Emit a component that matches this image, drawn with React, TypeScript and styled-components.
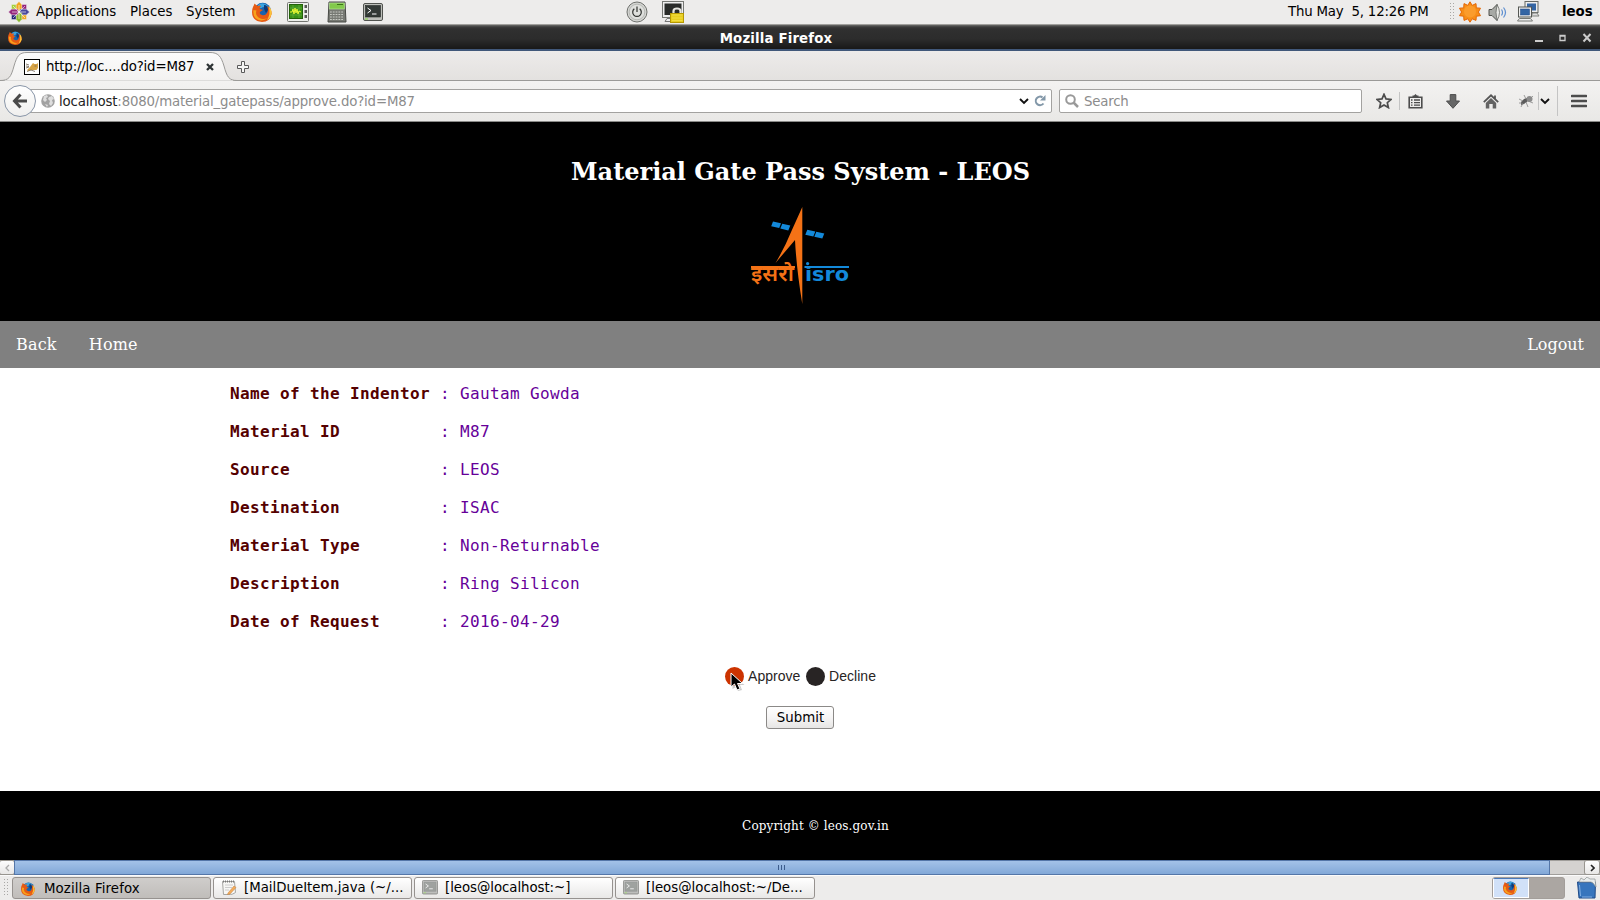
import React from "react";
import styled, { createGlobalStyle } from "styled-components";

const Global = createGlobalStyle`
  * { box-sizing: border-box; }
  html, body { margin: 0; padding: 0; overflow: hidden; background: #fff; }
  svg { display: block; flex: none; }
`;

const Desktop = styled.div`
  width: 1600px;
  height: 900px;
  display: flex;
  flex-direction: column;
  overflow: hidden;
  font-family: "DejaVu Sans", sans-serif;
  font-size: 13.33px;
  color: #000;
`;

const Slot = styled.div<{ $gap?: number; $w?: number; $drop?: number }>`
  flex: none;
  margin-left: ${(p) => p.$gap ?? 0}px;
  width: ${(p) => (p.$w ? p.$w + "px" : "auto")};
  padding-top: ${(p) => p.$drop ?? 0}px;
`;

const Label = styled.span<{ $gap?: number; $w?: number; $ls?: number; $bold?: boolean; $color?: string }>`
  flex: none;
  white-space: pre;
  margin-left: ${(p) => p.$gap ?? 0}px;
  width: ${(p) => (p.$w ? p.$w + "px" : "auto")};
  letter-spacing: ${(p) => (p.$ls === undefined ? "inherit" : p.$ls + "px")};
  font-weight: ${(p) => (p.$bold ? 700 : 400)};
  color: ${(p) => p.$color ?? "inherit"};
`;

const TopPanel = styled.header`
  height: 25px;
  flex: none;
  display: flex;
  align-items: center;
  padding: 0 0 1px 8px;
  background: #edeceb;
  border-bottom: 1px solid #a09f9c;
`;

const TitleBar = styled.div`
  height: 26px;
  flex: none;
  display: flex;
  align-items: center;
  padding: 2px 8px 0;
  background: linear-gradient(#6a6a68 0, #3c3c3c 2px, #303030 4px, #2c2c2c 14px, #181818 100%);
  border-bottom: 2px solid #41587a;
  color: #fff;
`;

const TitleText = styled.div`
  flex: 1;
  text-align: center;
  font-weight: 700;
  letter-spacing: 0.15px;
  padding-right: 4px;
`;

const WindowButtons = styled.div`
  display: flex;
  align-items: center;
  width: 58px;
`;

const TabStrip = styled.div`
  height: 30px;
  flex: none;
  display: flex;
  align-items: flex-end;
  background: linear-gradient(#edebea, #e3e1df);
  box-shadow: inset 0 -1px 0 #9b9a98;
`;

const Tab = styled.div`
  width: 237px;
  height: 29px;
  display: grid;
  & > * { grid-area: 1 / 1; }
`;

const TabContent = styled.div`
  display: flex;
  align-items: center;
  padding: 0 0 0 24px;
`;

const Toolbar = styled.div`
  height: 41px;
  flex: none;
  display: flex;
  align-items: center;
  background: linear-gradient(#f3f2f1, #e9e8e6);
  border-bottom: 1px solid #8a8a88;
  padding-left: 4px;
`;

const BackButton = styled.div`
  width: 32px;
  height: 32px;
  flex: none;
  border-radius: 50%;
  border: 1px solid #8996a8;
  background: linear-gradient(#fff, #f0efee);
  display: flex;
  align-items: center;
  justify-content: center;
  z-index: 1;
`;

const Field = styled.div<{ $w: number; $gap: number; $pad: number }>`
  width: ${(p) => p.$w}px;
  margin-left: ${(p) => p.$gap}px;
  padding-left: ${(p) => p.$pad}px;
  height: 24px;
  flex: none;
  display: flex;
  align-items: center;
  background: #fff;
  border: 1px solid #a3a2a0;
  border-radius: 2px;
`;

const Divider = styled.div<{ $gap: number; $h: number }>`
  width: 1px;
  height: ${(p) => p.$h}px;
  margin-left: ${(p) => p.$gap}px;
  background: #c4c4c4;
`;

const PageHeader = styled.div`
  height: 199px;
  flex: none;
  background: #000;
  display: flex;
  flex-direction: column;
  align-items: center;
`;

const Heading = styled.h2`
  margin: 36px 0 0;
  padding-left: 1px;
  height: 28px;
  font: 700 24px/28px "DejaVu Serif", serif;
  color: #fff;
  white-space: nowrap;
`;

const NavBar = styled.nav`
  height: 47px;
  flex: none;
  background: #808080;
  display: flex;
  align-items: center;
  justify-content: space-between;
  padding: 0 16px;
`;

const NavGroup = styled.div`
  display: flex;
  gap: 32px;
  letter-spacing: 0.2px;
`;

const NavLink = styled.a`
  font: 16px/20px "DejaVu Serif", serif;
  color: #fff;
`;

const Main = styled.main`
  height: 423px;
  flex: none;
  background: #fff;
  padding-top: 7px;
`;

const Details = styled.dl`
  margin: 0 0 0 230px;
  font: 16px/38px "DejaVu Sans Mono", monospace;
  letter-spacing: 0.367px;
`;

const DetailRow = styled.div`
  display: grid;
  grid-template-columns: 210px 20px auto;
  height: 38px;
  color: #660099;
  white-space: pre;
`;

const Term = styled.dt`
  font-weight: 700;
  color: #550000;
`;

const Value = styled.dd`
  margin: 0;
`;

const Choices = styled.div`
  margin-top: 26px;
  padding-left: 725px;
  height: 19px;
  display: flex;
  align-items: center;
  font: 14px/19px "Liberation Sans", sans-serif;
  letter-spacing: 0.04px;
  color: #282424;
`;

const Choice = styled.label<{ $w: number }>`
  display: flex;
  gap: 4px;
  width: ${(p) => p.$w}px;
  position: relative;
`;

const Dot = styled.span<{ $color: string }>`
  width: 19px;
  height: 19px;
  border-radius: 50%;
  background: ${(p) => p.$color};
`;

const Pointer = styled.svg`
  position: absolute;
  left: 5px;
  top: 5px;
`;

const Submit = styled.button`
  display: block;
  margin: 20px 0 0 766px;
  width: 68px;
  height: 23px;
  padding: 0 0 0 1px;
  border: 1px solid #8b8987;
  border-radius: 3px;
  background: linear-gradient(#fff, #f6f5f5 50%, #e6e5e4);
  font: 13.33px/20px "DejaVu Sans", sans-serif;
  color: #000;
`;

const Footer = styled.footer`
  height: 69px;
  flex: none;
  background: #000;
  color: #fff;
  text-align: center;
  font: 12px/71px "DejaVu Serif", serif;
  letter-spacing: 0.12px;
  padding-left: 31px;
  overflow: hidden;
`;

const ScrollBar = styled.div`
  height: 15px;
  flex: none;
  display: flex;
  background: #d4d2d0;
  border-top: 1px solid #a09e9b;
  border-bottom: 1px solid #a09e9b;
`;

const ScrollArrow = styled.div`
  width: 14px;
  height: 13px;
  flex: none;
  display: flex;
  align-items: center;
  justify-content: center;
  background: linear-gradient(#fdfdfd, #e8e7e6);
  box-shadow: 0 0 0 1px #98958f;
  border-radius: 2px;
`;

const Thumb = styled.div`
  width: 1536px;
  flex: none;
  margin: -1px 0;
  padding-right: 2px;
  border: 1px solid #5476a8;
  background: linear-gradient(#a3c2e8, #82a8d8);
  display: flex;
  align-items: center;
  justify-content: center;
  gap: 2px;
`;

const Grip = styled.i`
  width: 1px;
  height: 5px;
  background: #3c5c8c;
`;

const TaskBar = styled.div`
  height: 25px;
  flex: none;
  display: flex;
  align-items: center;
  background: #edeceb;
  border-top: 1px solid #fbfbfb;
  padding: 0 3px;
`;

const Task = styled.div<{ $active?: boolean; $gap: number; $w: number }>`
  width: ${(p) => p.$w}px;
  height: 22px;
  margin-left: ${(p) => p.$gap}px;
  padding: ${(p) => (p.$active ? "1px 0 0 7px" : "0 0 1px 7px")};
  flex: none;
  display: flex;
  align-items: center;
  border: 1px solid #96928f;
  border-radius: 3px;
  background: ${(p) => (p.$active ? "linear-gradient(#cfcdcb, #c0bdba)" : "linear-gradient(#ffffff, #e9e8e7)")};
`;

const Pager = styled.div`
  margin-left: auto;
  width: 73px;
  height: 22px;
  flex: none;
  display: flex;
  background: #aba6a2;
  border: 1px solid #a39e9a;
  border-radius: 3px;
  overflow: hidden;
`;

const ActiveDesk = styled.div`
  width: 36px;
  background: #d1e1f8;
  border: 1px solid #fff;
  border-top-color: #4a78b8;
  display: flex;
  align-items: center;
  justify-content: center;
  padding-right: 2px;
`;

const Firefox = ({ size }: { size: number }) => (
  <svg width={size} height={size} viewBox="0 0 20 20">
    <circle cx="10.6" cy="9.2" r="8.4" fill="#1863ae" />
    <path d="M6 3Q11-1 16 4Q14 6 11 5Q9 7 6 6Z" fill="#3ba4df" />
    <path d="M12 3q4 0 4 5l-2 3-2-4z" fill="#0b3c7c" />
    <path d="M1 5Q2 3 2.5 1.5Q4 3 6 4Q8 3 9 4Q7 6 8 7L11 8Q9 9 8 10Q7 12 10 13Q13 14 15 11Q17 8 15 4Q20 7 19.6 12Q18 20 10 20Q0 19 0 10Q0 7 1 5Z" fill="#e65a13" />
    <path d="M1.5 8q-1 7 4 9.5 7 3 12-4-3 5-9 3-6-3-4-8z" fill="#f6a21c" />
    <path d="M16.5 4Q20 7 19.6 12Q18 17 15 18Q19 12 16.5 4Z" fill="#fbc33a" />
  </svg>
);

const Foot = () => (
  <svg width="22" height="22" viewBox="0 0 22 22">
    <g stroke="#f4f4f4" strokeWidth=".4">
      <path d="M11 .5l3 3.2v6L11 11 8 9.7v-6z" fill="#f0a51c" />
      <path d="M21.5 11l-3.2-3h-6L11 11l1.3 3h6z" fill="#4a489c" />
      <path d="M11 21.5l3-3.2v-6L11 11l-3 1.3v6z" fill="#8bb92e" />
      <path d="M.5 11l3.2-3h6L11 11l-1.3 3h-6z" fill="#96287c" />
      <path d="M3.5 3.5h4.5v4.5H3.5z" fill="#a5cf3a" />
      <path d="M14 3.5h4.5v4.5H14z" fill="#932279" />
      <path d="M14 14h4.5v4.5H14z" fill="#efa724" />
      <path d="M3.5 14h4.5v4.5H3.5z" fill="#262577" />
    </g>
    <path d="M5 5l12 12M17 5L5 17M11 4v14M4 11h14" stroke="#fff" strokeWidth=".6" />
  </svg>
);

const SystemMonitor = () => (
  <svg width="22" height="20" viewBox="0 0 22 20">
    <rect x=".5" y=".5" width="21" height="19" rx="1" fill="#eceeea" stroke="#737570" />
    <rect x="2.5" y="2.5" width="13" height="14" fill="#399016" stroke="#236109" />
    <path d="M3 6h12M3 13h12M6 3v13M12 3v13" stroke="#75b84d" strokeWidth=".5" />
    <path d="M3 10h2l1-3 1 5 1-6 1 5 1-4 1 5 1-3 2 1" fill="none" stroke="#e7f634" />
    <g fill="#555753"><rect x="17.5" y="3" width="2.5" height="3" /><rect x="17.5" y="8" width="2.5" height="3" /><rect x="17.5" y="13" width="2.5" height="3" /></g>
  </svg>
);

const Calculator = () => (
  <svg width="20" height="22" viewBox="0 0 20 22">
    <path d="M2 1h16l1 20H1z" fill="#777973" stroke="#484a46" />
    <rect x="2.5" y="2" width="15" height="6" fill="#82c94b" stroke="#b9e69a" strokeWidth=".6" />
    <path d="M10 3.5h6" stroke="#397414" />
    <path d="M3 11h14M3 13.5h14M3 16h14M3 18.5h14" stroke="#c7c9c3" strokeWidth="1.2" strokeDasharray="1.8 1" />
  </svg>
);

const Terminal = ({ size = 20, faded = false }: { size?: number; faded?: boolean }) => (
  <svg width={size} height={size * 0.9} viewBox="0 0 20 18" opacity={faded ? 0.7 : 1}>
    <rect x=".5" y=".5" width="19" height="17" rx="1.5" fill={faded ? "#a9aaa8" : "#bdbfba"} stroke="#51534f" />
    <rect x="2.5" y="2.5" width="15" height="11.5" fill={faded ? "#7a7f7c" : "#333936"} stroke={faded ? "#666a68" : "#252826"} strokeWidth=".6" />
    <path d="M4.5 5l3.5 2.5-3.5 2.5M9 11h4.5" fill="none" stroke="#fff" />
    <path d="M2 16h3" stroke="#86d943" />
  </svg>
);

const PowerIcon = () => (
  <svg width="22" height="22" viewBox="0 0 22 22">
    <circle cx="11" cy="11" r="10" fill="#d4d5d2" stroke="#70726e" />
    <circle cx="11" cy="11" r="7.8" fill="#dfe0dd" stroke="#a9aaa6" strokeWidth=".7" />
    <path d="M11 5.5v5.5M8.3 7.8a4.3 4.3 0 1 0 5.4 0" fill="none" stroke="#2f312e" strokeWidth="1.2" />
  </svg>
);

const LockScreen = () => (
  <svg width="23" height="22" viewBox="0 0 23 22">
    <rect x=".5" y=".5" width="21" height="16" fill="#eee" stroke="#767874" />
    <rect x="2.5" y="2.5" width="17" height="11.5" fill="#292b29" />
    <path d="M3 20.5l2-3h8v3z" fill="#eee" stroke="#777" />
    <path d="M11.5 13v-3q0-2.5 3.5-2.5t3.5 2.5v3" fill="none" stroke="#e5e5e0" strokeWidth="2.2" />
    <rect x="8.5" y="12.5" width="13" height="9" fill="#e7cd20" stroke="#b69800" />
    <path d="M10 14h10.5M10 17h10.5M10 19.5h10.5" stroke="#f7e552" strokeWidth=".7" />
  </svg>
);

const Sun = () => (
  <svg width="22" height="22" viewBox="0 0 22 22">
    <path d="M11 .8l2.2 3.6 3.8-1.8.3 4.3 4.2.3-2.1 3.8 2.1 3.7-4.2.5-.3 4.2-3.8-1.6L11 21.2l-2.2-3.4L5 19.4l-.3-4.2-4.2-.5L2.6 11 .5 7.2l4.2-.3L5 2.6l3.8 1.8z" fill="#f78e18" stroke="#e46704" />
    <circle cx="11" cy="10.5" r="6" fill="#fb9c2c" />
  </svg>
);

const Volume = () => (
  <svg width="19" height="19" viewBox="0 0 19 19">
    <path d="M1 6.5h3l5-5q3 8 0 16l-5-5H1z" fill="#a7a9a5" stroke="#50524e" />
    <path d="M9 1.5q5 8 0 16q-2-8 0-16z" fill="#e8e9e6" stroke="#656763" strokeWidth=".8" />
    <path d="M13.5 6.5q2 3 0 6M15.5 4.5q4 5 0 10" fill="none" stroke="#5d8ed0" strokeWidth="1.2" />
  </svg>
);

const Network = () => (
  <svg width="23" height="21" viewBox="0 0 23 21">
    <rect x="8" y=".5" width="13" height="11" fill="#eee" stroke="#676965" />
    <rect x="10" y="2.5" width="9" height="7" fill="#3465a4" />
    <path d="M14 15l2-3h4l2 3z" fill="#ddd" stroke="#80827e" />
    <rect x="1.5" y="6" width="13" height="10" fill="#eee" stroke="#555753" />
    <rect x="3.5" y="8" width="9" height="6" fill="#3465a4" stroke="#204a87" strokeWidth=".5" />
    <path d="M.5 20l2-2.5h11l2 2.5z" fill="#eee" stroke="#777975" />
  </svg>
);

const Handle = () => (
  <svg width="6" height="18" viewBox="0 0 6 18">
    <path d="M1.5 0v18M4.5 0v18" stroke="#a9a8a6" strokeWidth="1" strokeDasharray="1 2" />
  </svg>
);

const IsroLogo = () => (
  <svg width="100" height="98" viewBox="0 0 100 98">
    <path d="M52.3 0L41.5 24Q35 40 25.5 56L45 33Q46.5 62 52.3 97Z" fill="#f47216" />
    <g fill="#1389da">
      <path d="M23 14.5l8 1.7-1.8 4.8-8-1.7zM32.3 16.7l8 1.8-2 4.9-8-1.8zM57.3 22.8l8 1.8-2 4.8-8-1.7zM66.3 24.8l8 1.8-2 5-8-1.9z" />
      <rect x="54.5" y="59" width="44.5" height="2" />
      <circle cx="57.6" cy="56.6" r="1.6" />
    </g>
    <rect x="1" y="59" width="44" height="2" fill="#f47216" />
    <text x="1" y="74" fill="#f47216" fontFamily="'Noto Sans Devanagari', 'Noto Sans', sans-serif" fontWeight="600" fontSize="21" textLength="43" lengthAdjust="spacingAndGlyphs">इसरो</text>
    <text x="55" y="74" fill="#1389da" fontFamily="'DejaVu Sans', sans-serif" fontWeight="700" fontSize="19" textLength="44" lengthAdjust="spacingAndGlyphs">isro</text>
  </svg>
);

const TomcatIcon = () => (
  <svg width="16" height="16" viewBox="0 0 16 16">
    <rect x=".5" y=".5" width="15" height="15" fill="#fff" stroke="#000" />
    <path d="M9 4l1.5 1h2L14 4v5l-1.5 2H9l-2 0-3 1-1-1 3-3z" fill="#d6a346" />
    <path d="M2 5l3 1M3 12.5l4-1.5 4 1.5M10.5 7h2M2 9l3-1M2 7l3 .5" stroke="#6e6250" fill="none" strokeWidth=".8" />
  </svg>
);

const Chevron = () => (
  <svg width="10" height="7" viewBox="0 0 10 7"><path d="M1 1l4 4 4-4" fill="none" stroke="#111" strokeWidth="1.9" /></svg>
);

const details: [string, string][] = [
  ["Name of the Indentor", "Gautam Gowda"],
  ["Material ID", "M87"],
  ["Source", "LEOS"],
  ["Destination", "ISAC"],
  ["Material Type", "Non-Returnable"],
  ["Description", "Ring Silicon"],
  ["Date of Request", "2016-04-29"],
];

export default function App() {
  return (
    <Desktop>
      <Global />
      <TopPanel>
        <Slot $w={22}><Foot /></Slot>
        <Label $gap={6} $w={94} $ls={-0.12}>Applications</Label>
        <Label $w={56}>Places</Label>
        <Label $w={66} $ls={-0.05}>System</Label>
        <Slot $w={35} $drop={1}><Firefox size={20} /></Slot>
        <Slot $w={40}><SystemMonitor /></Slot>
        <Slot $w={36}><Calculator /></Slot>
        <Slot $w={263} $drop={1}><Terminal /></Slot>
        <Slot $w={36}><PowerIcon /></Slot>
        <Slot $w={626}><LockScreen /></Slot>
        <Label $w={161} $ls={-0.2}>Thu May  5, 12:26 PM</Label>
        <Slot $w={10}><Handle /></Slot>
        <Slot $w={29}><Sun /></Slot>
        <Slot $w={29} $drop={1}><Volume /></Slot>
        <Slot $w={45}><Network /></Slot>
        <Label $bold>leos</Label>
      </TopPanel>

      <TitleBar>
        <Firefox size={14} />
        <TitleText>Mozilla Firefox</TitleText>
        <WindowButtons>
          <svg width="58" height="12" viewBox="0 0 58 12">
            <path d="M1 9h8" stroke="#ccc" strokeWidth="2" />
            <path d="M26 3.5h5v5h-5zM25.5 4h6" fill="none" stroke="#ccc" strokeWidth="1.3" />
            <path d="M49.5 2l7 7.5M56.5 2l-7 7.5" stroke="#ccc" strokeWidth="2" />
          </svg>
        </WindowButtons>
      </TitleBar>

      <TabStrip>
        <Tab>
          <svg width="237" height="29" viewBox="0 0 237 29">
            <defs><linearGradient id="tab" x1="0" y1="0" x2="0" y2="1"><stop offset="0" stopColor="#fbfbfb" /><stop offset="1" stopColor="#f3f2f1" /></linearGradient></defs>
            <path d="M0 28.5C9 28.5 11 25 14 14C17 4 19 .5 27 .5H210C218 .5 221 4 224 14C227 25 229 28.5 237 28.5" fill="url(#tab)" stroke="#9b9a98" />
            <path d="M5 29H233" stroke="#f3f2f1" />
          </svg>
          <TabContent>
            <TomcatIcon />
            <Label $gap={6} $w={160} $ls={-0.18}>http://loc....do?id=M87</Label>
            <svg width="8" height="8" viewBox="0 0 8 8"><path d="M1 1l6 6M7 1L1 7" stroke="#2e3436" strokeWidth="2.3" /></svg>
          </TabContent>
        </Tab>
        <svg width="12" height="20" viewBox="0 0 12 20"><path d="M4.5 .5h3v4h4v3h-4v4h-3v-4h-4v-3h4z" fill="#f6f6f5" stroke="#5a5a5a" /></svg>
      </TabStrip>

      <Toolbar>
        <BackButton>
          <svg width="16" height="16" viewBox="0 0 16 16"><path d="M8.5 1.5L2.5 8l6 6.5M3 8h12" fill="none" stroke="#4a4a4a" strokeWidth="3" /></svg>
        </BackButton>
        <Field $gap={-8} $w={1024} $pad={12}>
          <svg width="14" height="14" viewBox="0 0 14 14">
            <circle cx="7" cy="7" r="6.8" fill="#a2a2a2" />
            <path d="M3 2l3-1 1 2-2 1 1 2-2 2-2-2zM8 3l3-1 2 3-2 1 1 3-2 3-2-2 1-3-2-2zM4 10l3 1-1 2z" fill="#dedede" />
          </svg>
          <Label $gap={4} $w={960} $ls={-0.17} $color="#8c8c8c"><Label $color="#222">localhost</Label>:8080/material_gatepass/approve.do?id=M87</Label>
          <Chevron />
          <Slot $gap={5}>
            <svg width="12" height="12" viewBox="0 0 12 12"><path d="M9.5 8.5A4.3 4.3 0 1 1 8.500 2.300" fill="none" stroke="#8297a8" strokeWidth="2" /><path d="M11.5 0v5.5H6z" fill="#8297a8" /></svg>
          </Slot>
        </Field>
        <Field $gap={7} $w={303} $pad={5}>
          <svg width="14" height="14" viewBox="0 0 14 14"><circle cx="5.5" cy="5.5" r="4.3" fill="none" stroke="#999" strokeWidth="2" /><path d="M8.5 8.5l4.5 4.5" stroke="#999" strokeWidth="2.5" /></svg>
          <Label $gap={5} $ls={-0.2} $color="#8c8c8c">Search</Label>
        </Field>
        <Slot $gap={14}>
          <svg width="16" height="16" viewBox="0 0 16 16"><path d="M8 1.3l2 4.6 5 .5-3.7 3.3 1.1 4.9L8 12l-4.4 2.6 1.1-4.9L1 6.4l5-.5z" fill="none" stroke="#4c4c4c" strokeWidth="1.7" /></svg>
        </Slot>
        <Divider $gap={7} $h={18} />
        <Slot $gap={8}>
          <svg width="15" height="15" viewBox="0 0 15 15"><path d="M1.2 3.2h12.6v10.6H1.2z" fill="none" stroke="#4c4c4c" strokeWidth="1.6" /><path d="M4.5 3V1.5H6L7.5 0 9 1.5h1.5V3z" fill="#4c4c4c" /><path d="M3 6h1.5M6 6h6M3 8.6h1.5M6 8.6h6M3 11.2h1.5M6 11.2h6" stroke="#4c4c4c" strokeWidth="1.3" /></svg>
        </Slot>
        <Slot $gap={23}>
          <svg width="14" height="15" viewBox="0 0 14 15"><path d="M4.2 .6h5.6V7h3.7L7 14.3.5 7h3.7z" fill="#666" stroke="#4c4c4c" /></svg>
        </Slot>
        <Slot $gap={23}>
          <svg width="16" height="15" viewBox="0 0 16 15"><path d="M2.8 9L8 4l5.2 5v5.5H9.7V10H6.3v4.5H2.8z" fill="#636363" /><path d="M.8 8.2L8 1.3l7.2 6.9M12 1.5v4" fill="none" stroke="#555" strokeWidth="1.8" /></svg>
        </Slot>
        <Slot $gap={19}>
          <svg width="16" height="14" viewBox="0 0 16 14"><path d="M3 8l3-3 3-1 1 3-4 3-3 1z" fill="#5b5b5b" /><circle cx="11.5" cy="5" r="3" fill="#8c8c8c" /><path d="M1 5l4 2M6 1l2 4M5 9l-2 4M8 8l2 5M10 7l5 2M12 5l3-3M1 9h3" stroke="#888" strokeWidth=".8" /></svg>
        </Slot>
        <Divider $gap={4} $h={18} />
        <Slot $gap={1}><Chevron /></Slot>
        <Divider $gap={7} $h={30} />
        <Slot $gap={13}>
          <svg width="16" height="14" viewBox="0 0 16 14"><path d="M1 2h14M1 7h14M1 12h14" stroke="#4c4c4c" strokeWidth="2.6" strokeLinecap="round" /></svg>
        </Slot>
      </Toolbar>

      <PageHeader>
        <Heading>Material Gate Pass System - LEOS</Heading>
        <Slot $drop={21}><IsroLogo /></Slot>
      </PageHeader>

      <NavBar>
        <NavGroup><NavLink>Back</NavLink><NavLink>Home</NavLink></NavGroup>
        <NavLink>Logout</NavLink>
      </NavBar>

      <Main>
        <Details>
          {details.map(([term, value]) => (
            <DetailRow key={term}><Term>{term}</Term><span>:</span><Value>{value}</Value></DetailRow>
          ))}
        </Details>
        <Choices>
          <Choice $w={81}>
            <Dot $color="#cc3300" />Approve
            <Pointer width="16" height="20" viewBox="0 0 16 20"><path d="M2.5 3v14l3.5-2 2 4 4-1-2-5h4.5z" fill="#999" opacity=".5" /><path d="M1 1v14l3.5-3L7 18l3-1.2-2.5-5.3h5z" fill="#000" stroke="#fff" /></Pointer>
          </Choice>
          <Choice $w={81}><Dot $color="#282424" />Decline</Choice>
        </Choices>
        <Submit>Submit</Submit>
      </Main>

      <Footer>Copyright © leos.gov.in</Footer>

      <ScrollBar>
        <ScrollArrow><svg width="5" height="8" viewBox="0 0 5 8"><path d="M4 1L1 4l3 3" fill="none" stroke="#aaa" strokeWidth="1.3" /></svg></ScrollArrow>
        <Thumb><Grip /><Grip /><Grip /></Thumb>
        <Slot $gap={35}><ScrollArrow><svg width="5" height="8" viewBox="0 0 5 8"><path d="M1 1l3 3-3 3" fill="none" stroke="#222" strokeWidth="1.6" /></svg></ScrollArrow></Slot>
      </ScrollBar>

      <TaskBar>
        <Handle />
        <Task $gap={3} $w={199} $active><Slot $gap={1}><Firefox size={14} /></Slot><Label $gap={9} $ls={0.1}>Mozilla Firefox</Label></Task>
        <Task $gap={2} $w={199}>
          <svg width="16" height="16" viewBox="0 0 16 16"><path d="M1.5 1.5h12l1 11q-3 2-5 2h-7z" fill="#f7f7f5" stroke="#a5a5a2" /><path d="M2 1.5h12" stroke="#777" strokeWidth="2" strokeDasharray="1 1" /><path d="M4 5h8M4 7.5h7M4 10h4" stroke="#ccc" /><path d="M7 13l6-7 2 1.5-6 6.5-2.5.5z" fill="#f3ad5d" stroke="#c47d38" strokeWidth=".5" /></svg>
          <Label $gap={7}>[MailDueItem.java (~/...</Label>
        </Task>
        <Task $gap={2} $w={199}><Terminal size={16} faded /><Label $gap={7} $ls={-0.05}>[leos@localhost:~]</Label></Task>
        <Task $gap={2} $w={200}><Terminal size={16} faded /><Label $gap={7}>[leos@localhost:~/De...</Label></Task>
        <Pager><ActiveDesk><Firefox size={14} /></ActiveDesk></Pager>
        <Slot $gap={12}>
          <svg width="20" height="22" viewBox="0 0 20 22"><path d="M.5 5h18L18 21H2z" fill="#3775bd" stroke="#204a87" /><path d="M2 5l2-4 3 2 3-3 3 2 5 0 1 8-3-4-2-1-12 0z" fill="#e8ecec" stroke="#8c9292" strokeWidth=".7" /><path d="M2.5 8l1 11M5 20h10" stroke="#80aee2" /></svg>
        </Slot>
      </TaskBar>
    </Desktop>
  );
}
